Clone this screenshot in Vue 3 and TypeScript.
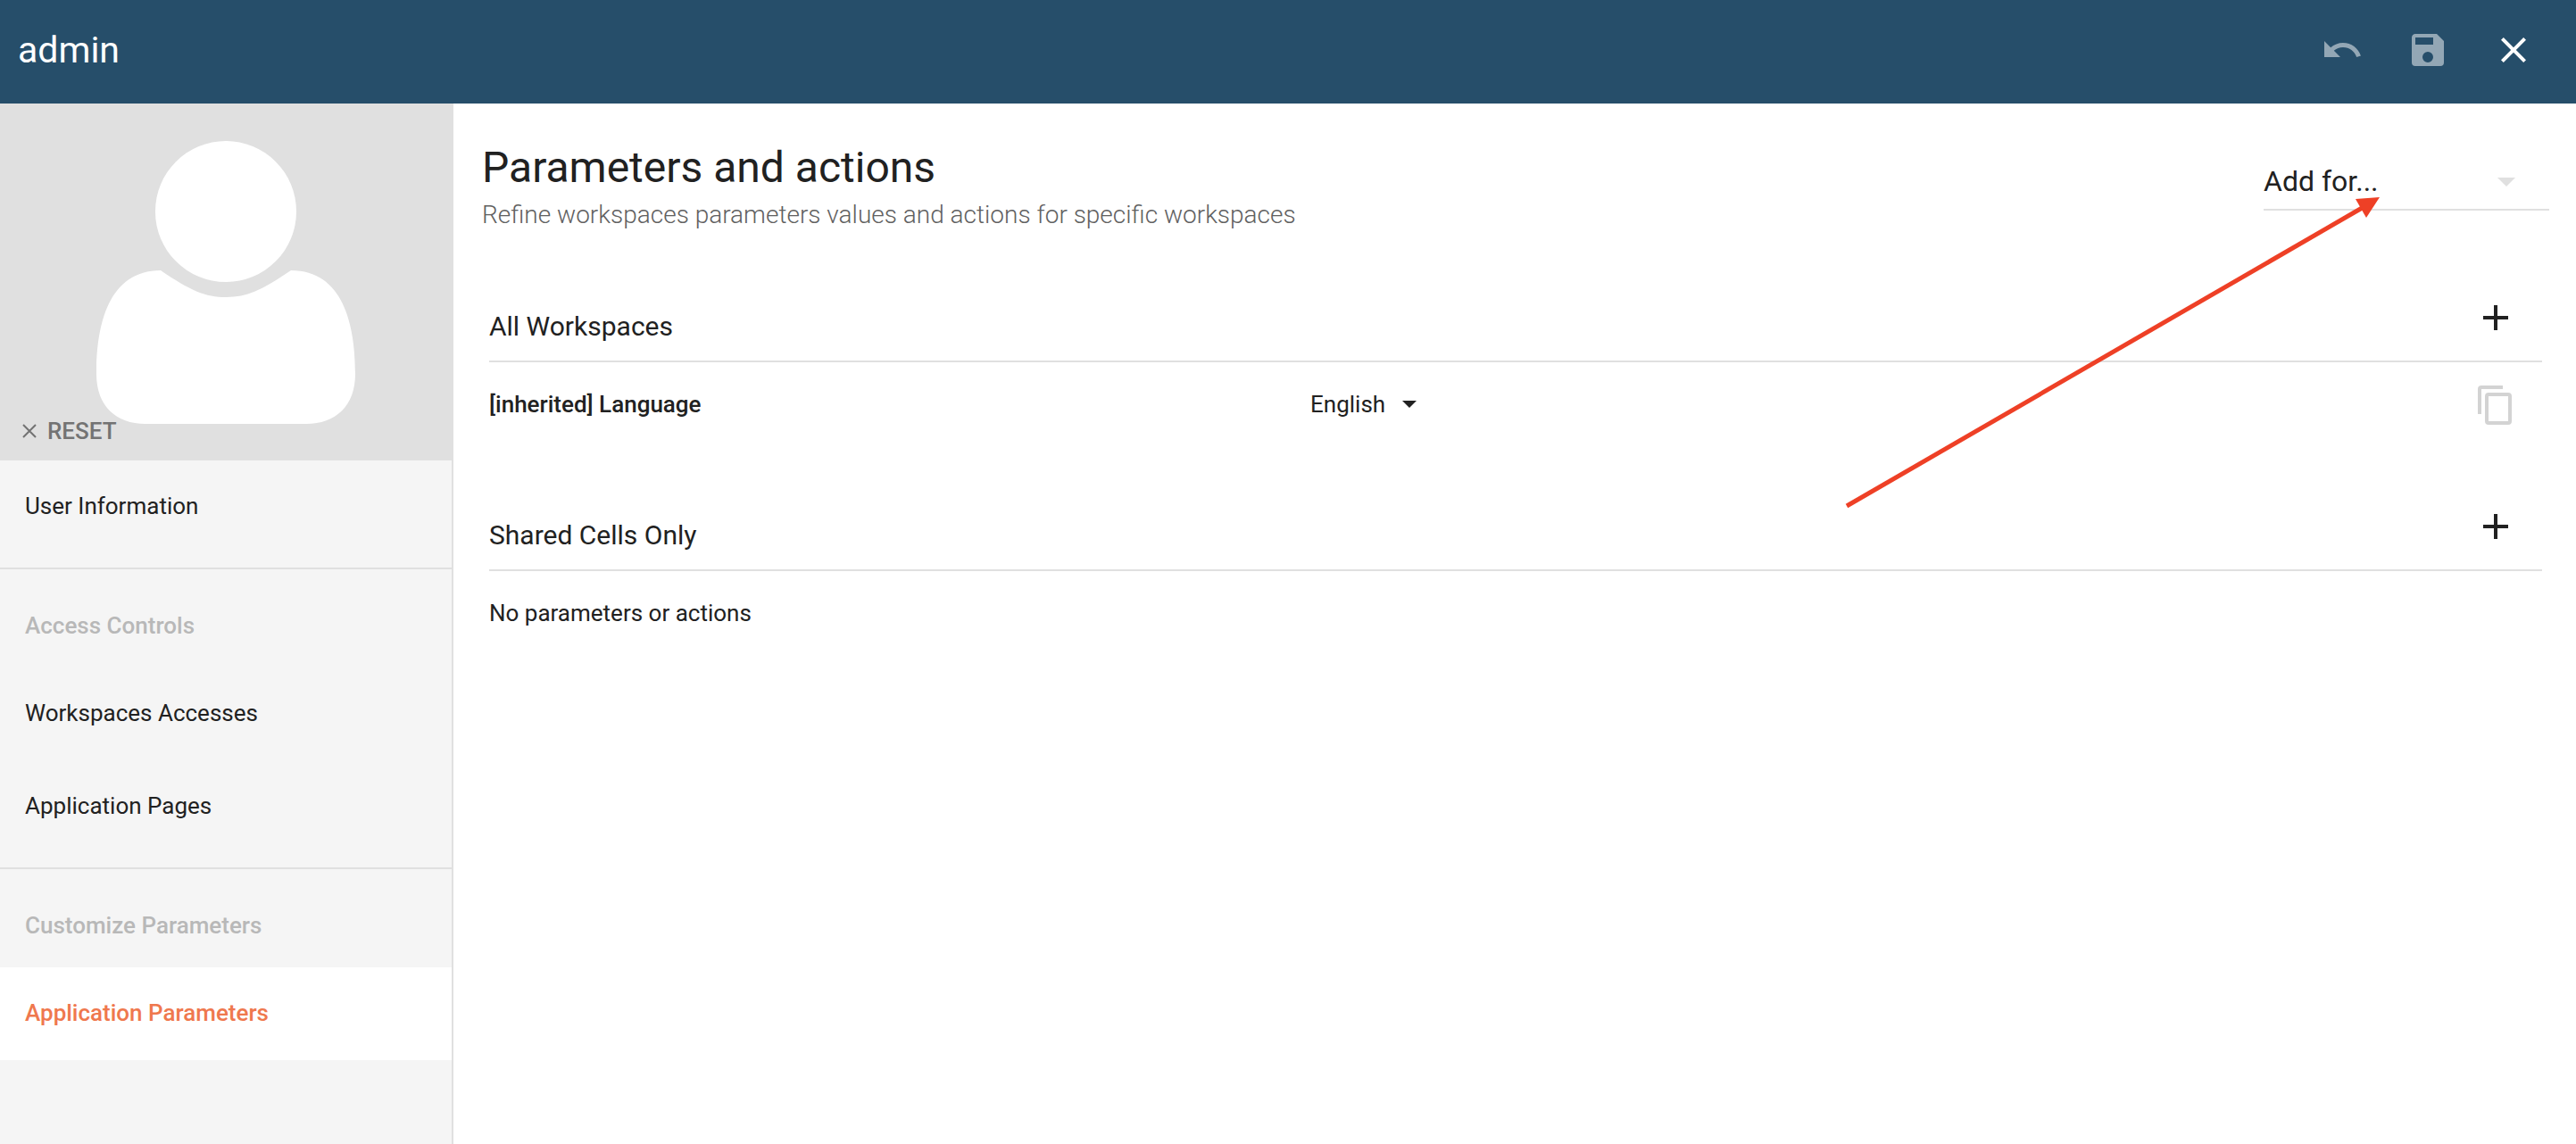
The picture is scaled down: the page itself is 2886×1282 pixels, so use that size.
<script setup lang="ts">
import { ref } from 'vue'

interface MenuItem {
  label: string
  active?: boolean
}

interface MenuGroup {
  title?: string
  items: MenuItem[]
}

interface Parameter {
  id: string
  label: string
  options: string[]
  value: string
}

interface Scope {
  title: string
  parameters: Parameter[]
}

const menu: MenuGroup[] = [
  { items: [{ label: 'User Information' }] },
  {
    title: 'Access Controls',
    items: [{ label: 'Workspaces Accesses' }, { label: 'Application Pages' }],
  },
  {
    title: 'Customize Parameters',
    items: [{ label: 'Application Parameters', active: true }],
  },
]

const scopes = ref<Scope[]>([
  {
    title: 'All Workspaces',
    parameters: [
      { id: 'language', label: '[inherited] Language', options: ['English'], value: 'English' },
    ],
  },
  { title: 'Shared Cells Only', parameters: [] },
])

const addFor = ref('')
</script>

<template>
  <div class="page">
    <header class="topbar">
      <h1 class="user">admin</h1>
      <div class="tools">
        <button class="icon-button" type="button" aria-label="Undo" disabled>
          <svg class="icon" viewBox="0 0 24 24"><path d="M12.5,8C9.85,8 7.45,9 5.6,10.6L2,7V16H11L7.38,12.38C8.77,11.22 10.54,10.5 12.5,10.5C16.04,10.5 19.05,12.81 20.1,16L22.47,15.22C21.08,11.03 17.15,8 12.5,8Z" /></svg>
        </button>
        <button class="icon-button" type="button" aria-label="Save" disabled>
          <svg class="icon" viewBox="0 0 24 24"><path fill-rule="evenodd" d="M17,3H5C3.89,3 3,3.9 3,5V19A2,2 0 0,0 5,21H19A2,2 0 0,0 21,19V7L17,3ZM12,19A3,3 0 1,1 12,13A3,3 0 0,1 12,19ZM15,9H5V5H15V9Z" /></svg>
        </button>
        <button class="icon-button" type="button" aria-label="Close">
          <svg class="icon" viewBox="0 0 24 24"><path d="M19,6.41L17.59,5L12,10.59L6.41,5L5,6.41L10.59,12L5,17.59L6.41,19L12,13.41L17.59,19L19,17.59L13.41,12L19,6.41Z" /></svg>
        </button>
      </div>
    </header>

    <div class="body">
      <aside class="sidebar">
        <div class="avatar">
          <svg class="person" viewBox="0 0 290 318" aria-hidden="true">
            <circle cx="145" cy="79" r="79" />
            <path d="M72,145C106,168 122,175 145,175C168,175 184,168 218,145C276,145 290,205 290,261C290,297 268,317 235,317H55C22,317 0,297 0,261C0,205 14,145 72,145Z" />
          </svg>
          <button class="reset" type="button">
            <svg class="reset-icon" viewBox="0 0 16 16"><path d="M1,1L15,15M15,1L1,15" /></svg>
            RESET
          </button>
        </div>
        <nav>
          <div v-for="(group, i) in menu" :key="i" class="group">
            <h2 v-if="group.title" class="group-title">{{ group.title }}</h2>
            <a
              v-for="item in group.items"
              :key="item.label"
              href="#"
              class="item"
              :class="{ active: item.active }"
            >{{ item.label }}</a>
          </div>
        </nav>
      </aside>

      <main class="content">
        <div class="heading">
          <div>
            <h2 class="title">Parameters and actions</h2>
            <p class="subtitle">Refine workspaces parameters values and actions for specific workspaces</p>
          </div>
          <div class="add-for">
            <select v-model="addFor" class="add-select" aria-label="Add for">
              <option value="">Add for...</option>
            </select>
            <svg class="add-caret" viewBox="0 0 20 12"><path d="M0,2H20L10,12Z" /></svg>
          </div>
        </div>

        <section v-for="scope in scopes" :key="scope.title" class="scope">
          <div class="scope-head">
            <h3 class="scope-title">{{ scope.title }}</h3>
            <button class="icon-button" type="button" aria-label="Add parameter">
              <svg class="icon" viewBox="0 0 24 24"><path d="M19,13H13V19H11V13H5V11H11V5H13V11H19V13Z" /></svg>
            </button>
          </div>
          <table v-if="scope.parameters.length" class="parameters">
            <tbody>
              <tr v-for="parameter in scope.parameters" :key="parameter.id">
                <th scope="row"><label :for="parameter.id">{{ parameter.label }}</label></th>
                <td>
                  <span class="value">
                    <select :id="parameter.id" v-model="parameter.value" class="value-select">
                      <option v-for="option in parameter.options" :key="option">{{ option }}</option>
                    </select>
                    <svg class="value-caret" viewBox="0 0 16 8"><path d="M0,0H16L8,8Z" /></svg>
                  </span>
                </td>
                <td class="action">
                  <button class="icon-button copy" type="button" aria-label="Copy">
                    <svg class="icon" viewBox="0 0 24 24"><path fill-rule="evenodd" d="M19,21H8V7H19V21ZM19,5H8A2,2 0 0,0 6,7V21A2,2 0 0,0 8,23H19A2,2 0 0,0 21,21V7A2,2 0 0,0 19,5ZM16,1H4A2,2 0 0,0 2,3V17H4V3H16V1Z" /></svg>
                  </button>
                </td>
              </tr>
            </tbody>
          </table>
          <p v-else class="empty">No parameters or actions</p>
        </section>
      </main>
    </div>

    <svg class="pointer" viewBox="0 0 602 352" aria-hidden="true">
      <path class="shaft" d="M3,349L582,14" />
      <path class="tip" d="M600,3L573,5L585,26Z" />
    </svg>
  </div>
</template>

<style>
body {
  margin: 0;
}
</style>

<style scoped>
.page {
  position: relative;
  display: flex;
  flex-direction: column;
  min-height: 100vh;
  background: #fff;
  color: #212121;
  font-family: Roboto, "Liberation Sans", sans-serif;
  font-size: 26px;
  line-height: 32px;
}

h1,
h2,
h3,
p {
  margin: 0;
  font-weight: 400;
}

button,
select {
  margin: 0;
  padding: 0;
  border: 0;
  background: none;
  color: inherit;
  font: inherit;
}

select {
  appearance: none;
  outline: none;
}

.topbar {
  display: flex;
  align-items: flex-start;
  justify-content: space-between;
  height: 116px;
  padding: 0 22px 0 20px;
  box-sizing: border-box;
  background: #264e6a;
  color: #fff;
}

.user {
  font-size: 41px;
  line-height: 112px;
}

.tools {
  display: flex;
  padding-top: 8px;
}

.icon-button {
  display: flex;
  align-items: center;
  justify-content: center;
  width: 96px;
  height: 96px;
}

.icon-button:disabled {
  opacity: 0.5;
}

.icon {
  width: 48px;
  height: 48px;
  fill: currentColor;
}

.body {
  display: flex;
  flex: 1;
}

.sidebar {
  flex: 0 0 506px;
  border-right: 2px solid #e0e0e0;
  background: #f5f5f5;
}

.avatar {
  position: relative;
  display: flex;
  justify-content: center;
  height: 400px;
  padding-top: 42px;
  box-sizing: border-box;
  background: #e0e0e0;
}

.person {
  width: 290px;
  height: 318px;
  fill: #fff;
}

.reset {
  position: absolute;
  left: 25px;
  bottom: 17px;
  display: flex;
  align-items: center;
  gap: 12px;
  color: #737373;
  font-weight: 500;
}

.reset-icon {
  width: 16px;
  height: 16px;
  fill: none;
  stroke: currentColor;
  stroke-width: 2;
}

.group {
  padding-bottom: 16px;
}

.group + .group {
  padding-top: 16px;
  border-top: 2px solid #e0e0e0;
}

.group-title {
  padding-left: 28px;
  color: #b8b8b8;
  font-size: 26px;
  font-weight: 500;
  line-height: 94px;
}

.item {
  display: block;
  padding: 0 28px 2px;
  color: #212121;
  line-height: 102px;
  text-decoration: none;
}

.item.active {
  background: #fff;
  color: #ef784e;
  font-weight: 500;
}

.content {
  flex: 1;
  min-width: 0;
}

.heading {
  display: flex;
  align-items: flex-start;
  justify-content: space-between;
  padding: 44px 30px 46px 32px;
}

.title {
  font-size: 48px;
  line-height: 56px;
}

.subtitle {
  padding-top: 4px;
  color: #616161;
  font-size: 28px;
  font-weight: 300;
  line-height: 42px;
}

.add-for {
  display: flex;
  align-items: center;
  width: 320px;
  height: 62px;
  margin-top: 12px;
  border-bottom: 2px solid #e0e0e0;
}

.add-select {
  flex: 1;
  height: 62px;
  margin-right: -58px;
  padding-right: 58px;
  font-size: 32px;
}

.add-caret {
  width: 20px;
  height: 12px;
  margin-right: 38px;
  fill: #e0e0e0;
  pointer-events: none;
}

.scope {
  margin: 0 38px 40px 40px;
}

.scope-head {
  display: flex;
  align-items: center;
  justify-content: space-between;
  padding-right: 4px;
  border-bottom: 2px solid #e0e0e0;
}

.scope-title {
  padding-top: 20px;
  font-size: 30px;
}

.parameters {
  width: 100%;
  border-collapse: collapse;
  table-layout: fixed;
}

.parameters th {
  width: 40%;
  padding: 0 0 2px;
  font-weight: 500;
  text-align: left;
}

.parameters td {
  padding: 0;
}

.parameters .action {
  width: 100px;
}

.value {
  display: inline-flex;
  align-items: center;
  padding-bottom: 2px;
}

.value-select {
  margin-right: -34px;
  padding-right: 52px;
}

.value-caret {
  width: 16px;
  height: 8px;
  fill: currentColor;
  pointer-events: none;
}

.copy {
  color: #d3d3d3;
}

.empty {
  padding-bottom: 2px;
  line-height: 94px;
}

.pointer {
  position: absolute;
  top: 218px;
  right: 218px;
  width: 602px;
  height: 352px;
  pointer-events: none;
}

.shaft {
  fill: none;
  stroke: #ee4026;
  stroke-width: 5;
}

.tip {
  fill: #ee4026;
}
</style>
